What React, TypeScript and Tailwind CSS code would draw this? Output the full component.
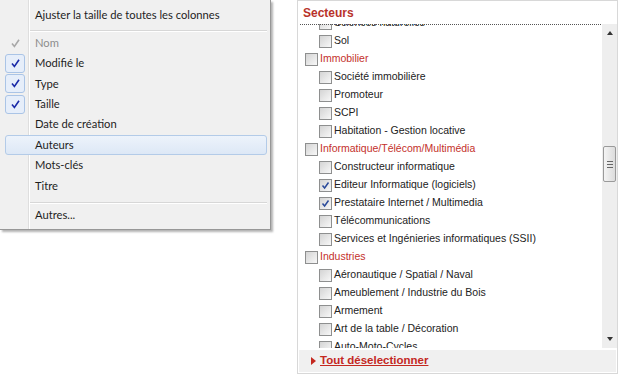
import { ReactNode } from "react";

type MenuRow = {
  label: string;
  check?: "on" | "disabled";
  hover?: boolean;
};

const menuRows: MenuRow[] = [
  { label: "Nom", check: "disabled" },
  { label: "Modifié le", check: "on" },
  { label: "Type", check: "on" },
  { label: "Taille", check: "on" },
  { label: "Date de création" },
  { label: "Auteurs", hover: true },
  { label: "Mots-clés" },
  { label: "Titre" },
];

type Sector = { label: string; top?: boolean; checked?: boolean };

const sectors: Sector[] = [
  { label: "Sciences naturelles" },
  { label: "Sol" },
  { label: "Immobilier", top: true },
  { label: "Société immobilière" },
  { label: "Promoteur" },
  { label: "SCPI" },
  { label: "Habitation - Gestion locative" },
  { label: "Informatique/Télécom/Multimédia", top: true },
  { label: "Constructeur informatique" },
  { label: "Editeur Informatique (logiciels)", checked: true },
  { label: "Prestataire Internet / Multimedia", checked: true },
  { label: "Télécommunications" },
  { label: "Services et Ingénieries informatiques (SSII)" },
  { label: "Industries", top: true },
  { label: "Aéronautique / Spatial / Naval" },
  { label: "Ameublement / Industrie du Bois" },
  { label: "Armement" },
  { label: "Art de la table / Décoration" },
  { label: "Auto-Moto-Cycles" },
];

function Tick({ color }: { color: string }) {
  return (
    <svg width="11" height="11" viewBox="0 0 11 11">
      <path d="M2 5.5 L4.4 8.5 L9 1.8" fill="none" stroke={color} strokeWidth="1.6" />
    </svg>
  );
}

function Separator() {
  return <div className="ml-[30px] mr-[3px] h-[2px] border-t border-[#d7d7d7] border-b-white border-b" />;
}

function ContextMenu() {
  return (
    <div className="relative w-[271px] h-[230px] bg-[#f0f0f0] border-r border-b border-[#979797] shadow-[2px_2px_2px_rgba(0,0,0,0.3)] text-[11.2px] text-[#1e1e1e] font-['Lato','Open_Sans',sans-serif]">
      {/* gutter line */}
      <div className="absolute left-[28px] top-0 bottom-0 w-[2px] border-l border-[#dedede] border-r border-r-white" />
      <div className="relative flex h-[30px] items-center pl-[35px]">Ajuster la taille de toutes les colonnes</div>
      <Separator />
      <div className="relative pt-[1px]">
        {menuRows.map((r) => (
          <div key={r.label} className="flex h-[20.4px] items-center">
            <div className="flex w-[30px] justify-center">
              {r.check === "on" && (
                <div className="flex h-[19px] w-[20px] items-center justify-center rounded-[3px] border border-[#aac4e6] bg-[#e6eefa]">
                  <Tick color="#1a2aa8" />
                </div>
              )}
              {r.check === "disabled" && (
                <div className="flex h-[19px] w-[20px] items-center justify-center">
                  <Tick color="#a8a8a8" />
                </div>
              )}
            </div>
            <div
              className={
                r.hover
                  ? "-ml-[25px] mr-[3px] flex h-[20px] flex-1 items-center rounded-[3px] border border-[#b3cbe8] bg-gradient-to-b from-[#edf3fb] to-[#dde8f6] pl-[29px]"
                  : "flex flex-1 items-center pl-[5px]"
              }
            >
              <span className={r.check === "disabled" ? "text-[#8d8d8d]" : ""}>{r.label}</span>
            </div>
          </div>
        ))}
      </div>
      <div className="h-[6px]" />
      <Separator />
      <div className="relative flex h-[23px] items-center pl-[35px]">Autres...</div>
    </div>
  );
}

function Box({ checked }: { checked?: boolean }) {
  return (
    <div className="flex h-[13px] w-[13px] shrink-0 items-center justify-center border border-[#8e8f8f] bg-gradient-to-br from-[#d4d4d4] to-[#f8f8f8]">
      {checked && (
        <svg width="9" height="9" viewBox="0 0 9 9">
          <path d="M1.5 4.5 L3.6 7 L7.5 1.5" fill="none" stroke="#2a4a9a" strokeWidth="1.5" />
        </svg>
      )}
    </div>
  );
}

function Scrollbar() {
  return (
    <div className="flex w-[16px] flex-col items-center border-l border-white bg-[#eeeeee]">
      <div className="flex h-[16px] w-full items-center justify-center pt-[2px]">
        <span className="block h-0 w-0 border-x-[3px] border-b-[4px] border-x-transparent border-b-[#333]" />
      </div>
      <div className="h-[106px]" />
      <div className="flex h-[36px] w-[13px] flex-col items-center justify-center gap-[2px] rounded-[2px] border border-[#9a9a9a] bg-gradient-to-r from-[#f4f4f4] to-[#dcdcdc]">
        <span className="h-px w-[6px] bg-[#666]" />
        <span className="h-px w-[6px] bg-[#666]" />
        <span className="h-px w-[6px] bg-[#666]" />
      </div>
      <div className="flex-1" />
      <div className="flex h-[16px] w-full items-center justify-center pb-[2px]">
        <span className="block h-0 w-0 border-x-[3px] border-t-[4px] border-x-transparent border-t-[#333]" />
      </div>
    </div>
  );
}

function Row({ s }: { s: Sector }): ReactNode {
  return (
    <div className={`flex h-[18px] items-center gap-[2px] ${s.top ? "pl-[7px] text-[#c4302b]" : "pl-[21px] text-[#222]"}`}>
      <Box checked={s.checked} />
      <span className="whitespace-nowrap">{s.label}</span>
    </div>
  );
}

function SectorPanel() {
  return (
    <div className="flex h-[374px] w-[321px] flex-col border border-[#d8d8d8] bg-white font-['Liberation_Sans',Arial,sans-serif] text-[10.5px]">
      <div className="flex h-[23px] items-center pl-[5px] text-[12px] font-bold text-[#b8322a]">Secteurs</div>
      <div className="flex h-[324px]">
        <div className="relative flex-1 overflow-hidden">
          <div className="absolute left-[2px] right-0 top-0 border-t border-dotted border-[#555]" />
          <div className="-mt-[10px]">
            {sectors.map((s) => (
              <Row key={s.label} s={s} />
            ))}
          </div>
        </div>
        <Scrollbar />
      </div>
      <div className="mx-[1px] mt-[2px] flex h-[22px] items-center gap-[4px] bg-[#f0f0f0] pl-[12px] text-[11.5px] font-bold text-[#c4281f]">
        <span className="block h-0 w-0 border-y-[4px] border-l-[5px] border-y-transparent border-l-[#c4281f]" />
        <span className="underline">Tout déselectionner</span>
      </div>
    </div>
  );
}

export default function App() {
  return (
    <div className="flex h-[385px] w-[620px] items-start gap-[26px] bg-white">
      <ContextMenu />
      <SectorPanel />
    </div>
  );
}
